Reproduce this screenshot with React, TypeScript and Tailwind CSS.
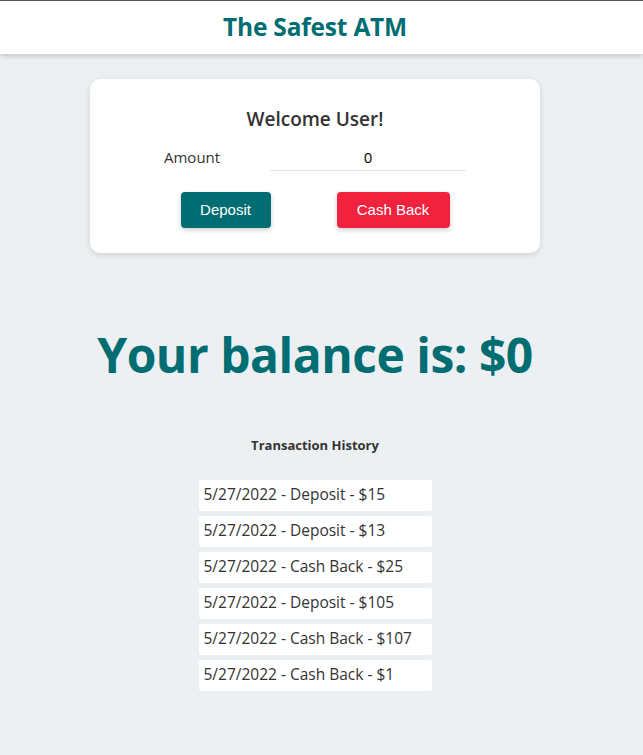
import React from 'react';

const history = [
  '5/27/2022 - Deposit - $15',
  '5/27/2022 - Deposit - $13',
  '5/27/2022 - Cash Back - $25',
  '5/27/2022 - Deposit - $105',
  '5/27/2022 - Cash Back - $107',
  '5/27/2022 - Cash Back - $1',
];

export default function App() {
  return (
    <div className="min-h-[755px] bg-[#ecf0f3] font-['Open_Sans','Noto_Sans',sans-serif] text-[#333]">
      {/* header */}
      <header className="h-[54px] bg-white border-t border-[#555] shadow-[0_2px_5px_rgba(0,0,0,0.18)]">
        <div className="w-[630px] h-full flex items-center justify-center">
          <h1 className="text-[24.5px] font-bold text-[#006d72] tracking-[-0.2px]">The Safest ATM</h1>
        </div>
      </header>

      <div className="w-[630px]">
        {/* card */}
        <div className="w-[450px] mx-auto mt-[25px] bg-white rounded-[10px] shadow-[0_2px_6px_rgba(0,0,0,0.12)] pt-[25px] pb-[25px] flex flex-col items-center">
          <h2 className="text-[19px] font-semibold text-[#333] leading-[30px]">Welcome User!</h2>
          <div className="flex items-center mt-[9px]">
            <label className="w-[106px] text-[15px] text-[#333]">Amount</label>
            <input
              defaultValue="0"
              className="w-[196px] h-[28px] text-center text-[15px] text-black border-b border-[#e3e6e8] outline-none bg-transparent"
            />
          </div>
          <div className="flex gap-[66px] mt-[21px] font-['Liberation_Sans',Arial,sans-serif]">
            <button className="w-[90px] h-[36px] rounded-[4px] bg-[#006d72] text-white text-[15px] shadow-[0_2px_5px_rgba(0,0,0,0.2)]">Deposit</button>
            <button className="w-[113px] h-[36px] rounded-[4px] bg-[#f0223e] text-white text-[15px] shadow-[0_2px_5px_rgba(0,0,0,0.2)]">Cash Back</button>
          </div>
        </div>

        {/* balance */}
        <h1 className="text-center text-[48px] font-bold text-[#006d72] mt-[66px] leading-[72px] tracking-[-0.5px]">Your balance is: $0</h1>

        {/* history */}
        <h3 className="text-center text-[13px] font-bold text-[#333] mt-[45px]">Transaction History</h3>
        <ul className="flex flex-col items-center gap-[5px] mt-[24px] pb-[60px]">
          {history.map((item, i) => (
            <li key={i} className="w-[233px] h-[31px] bg-white rounded-[3px] pl-[5px] flex items-center text-[15.5px] text-[#333]">
              {item}
            </li>
          ))}
        </ul>
      </div>
    </div>
  );
}
